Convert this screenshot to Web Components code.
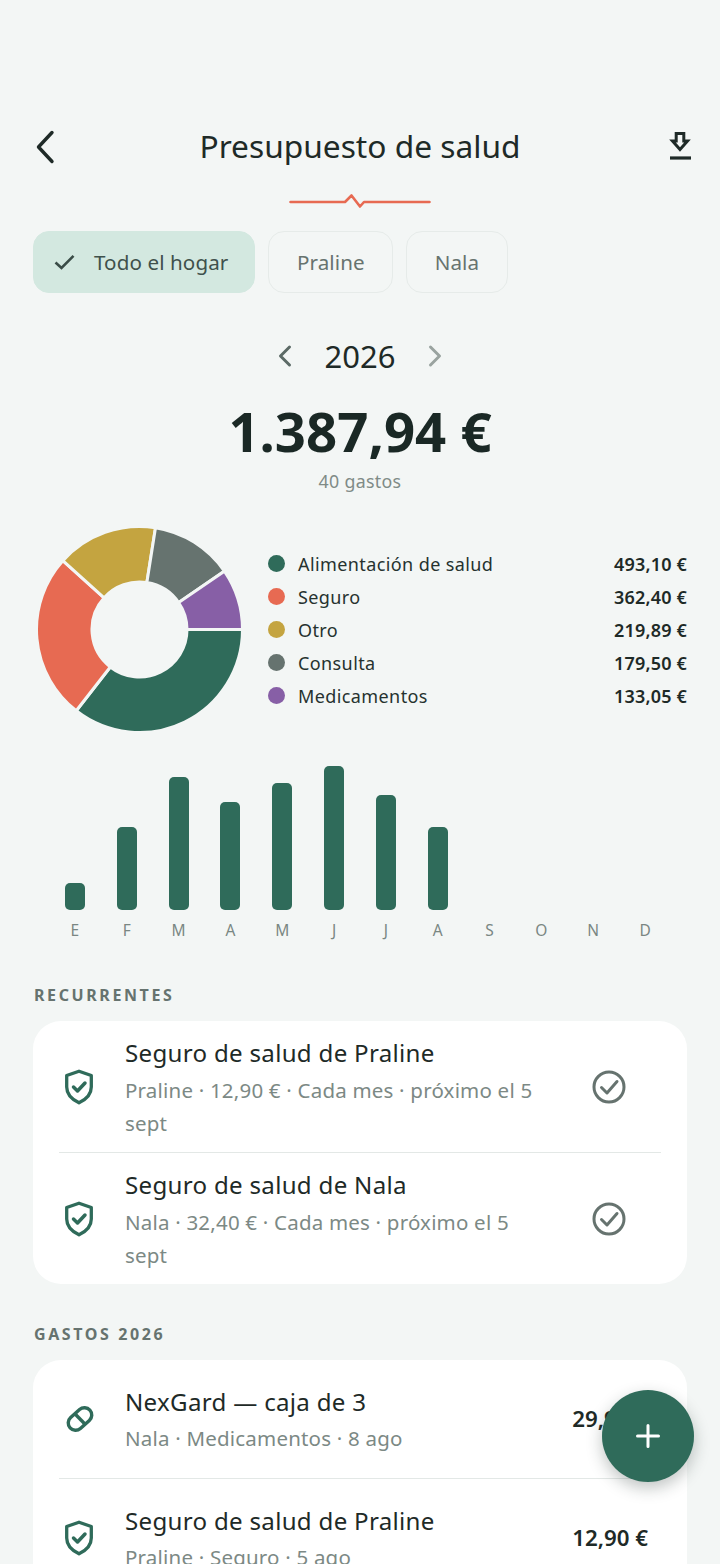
<!DOCTYPE html>
<html lang="es">
<head>
<meta charset="utf-8">
<title>Presupuesto de salud</title>
<style>
html, body { margin: 0; height: 1564px; overflow: hidden; background: #f3f6f5; }
body { position: relative; font-family: "Noto Sans", "Open Sans", sans-serif; color: #1e2a27; }
main { display: block; padding: 0 33px; }
</style>
</head>
<body>
<main>
  <app-header title="Presupuesto de salud"></app-header>
  <chip-row>
    <filter-chip active>Todo el hogar</filter-chip>
    <filter-chip>Praline</filter-chip>
    <filter-chip>Nala</filter-chip>
  </chip-row>
  <year-total year="2026" total="1.387,94 €" count="40 gastos"></year-total>
  <donut-legend></donut-legend>
  <month-bars></month-bars>
  <section-label style="margin-top:44px">RECURRENTES</section-label>
  <list-card>
    <list-row icon="shield" kind="recurring" name="Seguro de salud de Praline" sub="Praline · 12,90 € · Cada mes · próximo el 5 sept"></list-row>
    <list-row icon="shield" kind="recurring" name="Seguro de salud de Nala" sub="Nala · 32,40 € · Cada mes · próximo el 5 sept"></list-row>
  </list-card>
  <section-label style="margin-top:39px">GASTOS 2026</section-label>
  <list-card>
    <list-row icon="pill" name="NexGard — caja de 3" sub="Nala · Medicamentos · 8 ago" amount="29,90 €"></list-row>
    <list-row icon="shield" name="Seguro de salud de Praline" sub="Praline · Seguro · 5 ago" amount="12,90 €"></list-row>
  </list-card>
</main>
<add-fab></add-fab>
<script>
const GREEN = '#2f6b5a'

class AppHeader extends HTMLElement {
    connectedCallback() {
        const root = this.attachShadow({ mode: 'open' })
        root.innerHTML = `<style>
            :host { display: block; padding-top: 123px; }
            .top { display: grid; grid-template-columns: 1fr auto 1fr; align-items: center; height: 44px; }
            h1 { margin: 0; font-size: 31.700px; font-weight: 400; color: #1e2a27; white-space: nowrap; }
            svg { display: block; margin-top: 4px; }
            .dl { justify-self: end; margin-right: -6px; }
            .beat { display: flex; justify-content: center; padding: 27px 0 23px; }
            .beat svg { margin: 0; }
        </style>
        <div class="top">
            <svg width="26" height="36" viewBox="0 0 26 36" fill="none" stroke="#1e2a27" stroke-width="3.4" stroke-linecap="round" stroke-linejoin="round"><path d="M19 3.5 5.5 18 19 32.5"/></svg>
            <h1>${this.getAttribute('title')}</h1>
            <svg class="dl" width="26" height="30" viewBox="0 0 26 30" fill="none" stroke="#1e2a27" stroke-width="3"><path d="M9.2 1.500h7.600V9h3.700L13 17.500 5.500 9h3.700z"/><path d="M3 26h21" stroke-width="3.200"/></svg>
        </div>
        <div class="beat"><svg width="142" height="14" viewBox="0 0 142 14" fill="none" stroke="#e76a52" stroke-width="2.6" stroke-linecap="round" stroke-linejoin="round"><path d="M1.500 8H56L62.500 1.500 71 12.500 75 8H140.500"/></svg></div>`
    }
}

class ChipRow extends HTMLElement {
    constructor() {
        super()
        this.attachShadow({ mode: 'open' }).innerHTML = `<style>
            :host { display: flex; gap: 13px; }
        </style><slot></slot>`
    }
}

class FilterChip extends HTMLElement {
    connectedCallback() {
        const active = this.hasAttribute('active')
        const root = this.attachShadow({ mode: 'open' })
        root.innerHTML = `<style>
            :host { display: flex; align-items: center; gap: 19px; height: 62px; box-sizing: border-box; border-radius: 16px;
                padding: 0 27.500px; font-size: 20.600px; letter-spacing: .1px; border: 1.5px solid #e6ebe9; color: #67736f; }
            :host([active]) { background: #d3e8e0; border-color: #d3e8e0; color: #3f514c; padding: 0 26px 0 20px; }
            svg { display: block; }
        </style>
        ${active ? `<svg width="21" height="16" viewBox="0 0 21 16" fill="none" stroke="#3a4c47" stroke-width="2.600"><path d="M1.500 8.500 7.500 14 19.500 1.800"/></svg>` : ''}
        <span><slot></slot></span>`
    }
}

class YearTotal extends HTMLElement {
    connectedCallback() {
        const root = this.attachShadow({ mode: 'open' })
        root.innerHTML = `<style>
            :host { display: block; text-align: center; padding-top: 39px; }
            .year { display: flex; align-items: center; justify-content: center; gap: 32px; height: 48px; font-size: 31px; color: #1e2a27; }
            svg { display: block; }
            .total { font-size: 54.500px; font-weight: 700; color: #1a2825; line-height: 70px; margin-top: 16px; }
            .count { font-size: 17.800px; color: #7f8b87; line-height: 26px; margin-top: 2px; letter-spacing: .3px; }
        </style>
        <div class="year">
            <svg width="16" height="24" viewBox="0 0 16 24" fill="none" stroke="#5c6a66" stroke-width="3" stroke-linecap="round" stroke-linejoin="round"><path d="M12.500 3 3.500 12l9 9"/></svg>
            <span>${this.getAttribute('year')}</span>
            <svg width="16" height="24" viewBox="0 0 16 24" fill="none" stroke="#9aa3a0" stroke-width="3" stroke-linecap="round" stroke-linejoin="round"><path d="M3.500 3l9 9-9 9"/></svg>
        </div>
        <div class="total">${this.getAttribute('total')}</div>
        <div class="count">${this.getAttribute('count')}</div>`
    }
}

const CATEGORIES = [
    { label: 'Alimentación de salud', value: 493.10, text: '493,10 €', color: GREEN },
    { label: 'Seguro', value: 362.40, text: '362,40 €', color: '#e76a52' },
    { label: 'Otro', value: 219.89, text: '219,89 €', color: '#c4a440' },
    { label: 'Consulta', value: 179.50, text: '179,50 €', color: '#66736f' },
    { label: 'Medicamentos', value: 133.05, text: '133,05 €', color: '#875fa6' },
]

class DonutLegend extends HTMLElement {
    // anneau en chemins svg, sens horaire depuis 3 heures
    buildSlices(cx, cy, R, r) {
        const sum = CATEGORIES.reduce((s, c) => s + c.value, 0)
        let a = 0
        let dom = ''
        for (const c of CATEGORIES) {
            const b = a + c.value / sum * Math.PI * 2
            const large = b - a > Math.PI ? 1 : 0
            const p = (rad, t) => `${(cx + rad * Math.cos(t)).toFixed(2)} ${(cy + rad * Math.sin(t)).toFixed(2)}`
            dom += `<path d="M${p(R, a)}A${R} ${R} 0 ${large} 1 ${p(R, b)}L${p(r, b)}A${r} ${r} 0 ${large} 0 ${p(r, a)}Z" fill="${c.color}" stroke="#f3f6f5" stroke-width="3"/>`
            a = b
        }
        return dom
    }

    connectedCallback() {
        const root = this.attachShadow({ mode: 'open' })
        root.innerHTML = `<style>
            :host { display: flex; align-items: center; padding-top: 32px; }
            svg.pie { display: block; margin-left: 3px; flex: none; }
            ul { list-style: none; margin: 0 0 0 25px; padding: 0; flex: 1; display: grid; gap: 0; }
            li { display: flex; align-items: center; height: 33px; font-size: 18px; letter-spacing: .4px; color: #26322f; }
            i { width: 17px; height: 17px; border-radius: 50%; margin-right: 13px; flex: none; }
            b { margin-left: auto; font-size: 18px; font-weight: 600; letter-spacing: .2px; color: #1e2a27; }
        </style>
        <svg class="pie" width="207" height="207" viewBox="0 0 207 207">${this.buildSlices(103.5, 103.5, 103, 47.5)}</svg>
        <ul>${CATEGORIES.map(c => `<li><i style="background:${c.color}"></i><span>${c.label}</span><b>${c.text}</b></li>`).join('')}</ul>`
    }
}

class MonthBars extends HTMLElement {
    connectedCallback() {
        const months = 'EFMAMJJASOND'.split('')
        const heights = [27, 83, 133, 108, 127, 144, 115, 83, 0, 0, 0, 0]
        const root = this.attachShadow({ mode: 'open' })
        root.innerHTML = `<style>
            :host { display: grid; grid-template-columns: repeat(12, 1fr); padding: 25px 16px 0; }
            .col { display: flex; flex-direction: column; align-items: center; justify-content: flex-end; height: 152px; }
            .col i { display: block; width: 20px; border-radius: 5px; background: ${GREEN}; }
            .lab { text-align: center; font-size: 15.500px; line-height: 20px; margin-top: 10px; color: #7a8783; }
        </style>
        ${months.map((m, i) => `<div><div class="col"><i style="height:${heights[i]}px"></i></div><div class="lab">${m}</div></div>`).join('')}`
    }
}

class SectionLabel extends HTMLElement {
    constructor() {
        super()
        this.attachShadow({ mode: 'open' }).innerHTML = `<style>
            :host { display: block; font-size: 16px; font-weight: 700; letter-spacing: 2.600px; line-height: 22px; color: #66736f; padding: 0 0 15px 1px; }
        </style><slot></slot>`
    }
}

class ListCard extends HTMLElement {
    constructor() {
        super()
        this.attachShadow({ mode: 'open' }).innerHTML = `<style>
            :host { display: block; background: #fff; border-radius: 28px; padding: 0 26px; }
        </style><slot></slot>`
    }
}

const ICONS = {
    shield: `<svg width="30" height="36" viewBox="0 0 30 36" fill="none" stroke="${GREEN}" stroke-width="3.300" stroke-linejoin="round" stroke-linecap="round"><path d="M15 2.200 27.300 6.500V18C27.300 25.500 22 30.500 15 33.800 8 30.500 2.700 25.500 2.700 18V6.500Z"/><path d="M9.500 18 13.500 22 21 14" stroke-width="3.500"/></svg>`,
    pill: `<svg width="30" height="30" viewBox="0 0 30 30" fill="none" stroke="${GREEN}" stroke-width="3.400"><rect x="-13.300" y="-7.300" width="26.600" height="14.600" rx="7.300" transform="translate(16 15) rotate(-42)"/><path d="M11.100 10 20.900 20"/></svg>`,
}

class ListRow extends HTMLElement {
    connectedCallback() {
        const recurring = this.getAttribute('kind') === 'recurring'
        const amount = this.getAttribute('amount')
        const root = this.attachShadow({ mode: 'open' })
        root.innerHTML = `<style>
            :host { display: flex; align-items: center; box-sizing: border-box; padding: ${recurring ? '15px 0 12px' : '25px 0 23px'}; }
            :host(:not(:first-child)) { border-top: 1.500px solid #e3e8e6; }
            .ico { width: 39px; flex: none; display: flex; justify-content: center; margin: 0 27px 3px 0; }
            svg { display: block; }
            .txt { flex: 1; min-width: 0; }
            .name { font-size: 24.100px; line-height: 34px; letter-spacing: .3px; color: #1e2a27; white-space: nowrap; }
            .sub { font-size: 20.500px; line-height: 33px; margin-top: ${recurring ? 4 : 3}px; color: #7c8985; letter-spacing: .2px; }
            .amount { flex: none; font-size: 22.300px; font-weight: 600; color: #1e2a27; margin: 0 13px 3px 12px; white-space: nowrap; }
            .check { flex: none; margin: 0 35px 3px 50px; }
        </style>
        <div class="ico">${ICONS[this.getAttribute('icon')]}</div>
        <div class="txt"><div class="name">${this.getAttribute('name')}</div><div class="sub">${this.getAttribute('sub')}</div></div>
        ${amount ? `<div class="amount">${amount}</div>`
            : `<svg class="check" width="34" height="34" viewBox="0 0 34 34" fill="none" stroke="#66736f" stroke-width="3"><circle cx="17" cy="17" r="15"/><path d="M9.500 17.500 15 23 25 11.500" stroke-linecap="round" stroke-linejoin="round"/></svg>`}`
    }
}

class AddFab extends HTMLElement {
    constructor() {
        super()
        this.attachShadow({ mode: 'open' }).innerHTML = `<style>
            :host { position: absolute; left: 602px; top: 1390px; width: 92px; height: 92px; border-radius: 50%; background: ${GREEN};
                box-shadow: 0 6px 16px rgba(30, 42, 39, .28); display: flex; align-items: center; justify-content: center; }
            svg { display: block; }
        </style>
        <svg width="26" height="26" viewBox="0 0 26 26" stroke="#fff" stroke-width="3" stroke-linecap="round"><path d="M13 2.500v21M2.500 13h21"/></svg>`
    }
}

customElements.define('app-header', AppHeader)
customElements.define('chip-row', ChipRow)
customElements.define('filter-chip', FilterChip)
customElements.define('year-total', YearTotal)
customElements.define('donut-legend', DonutLegend)
customElements.define('month-bars', MonthBars)
customElements.define('section-label', SectionLabel)
customElements.define('list-card', ListCard)
customElements.define('list-row', ListRow)
customElements.define('add-fab', AddFab)
</script>
</body>
</html>
